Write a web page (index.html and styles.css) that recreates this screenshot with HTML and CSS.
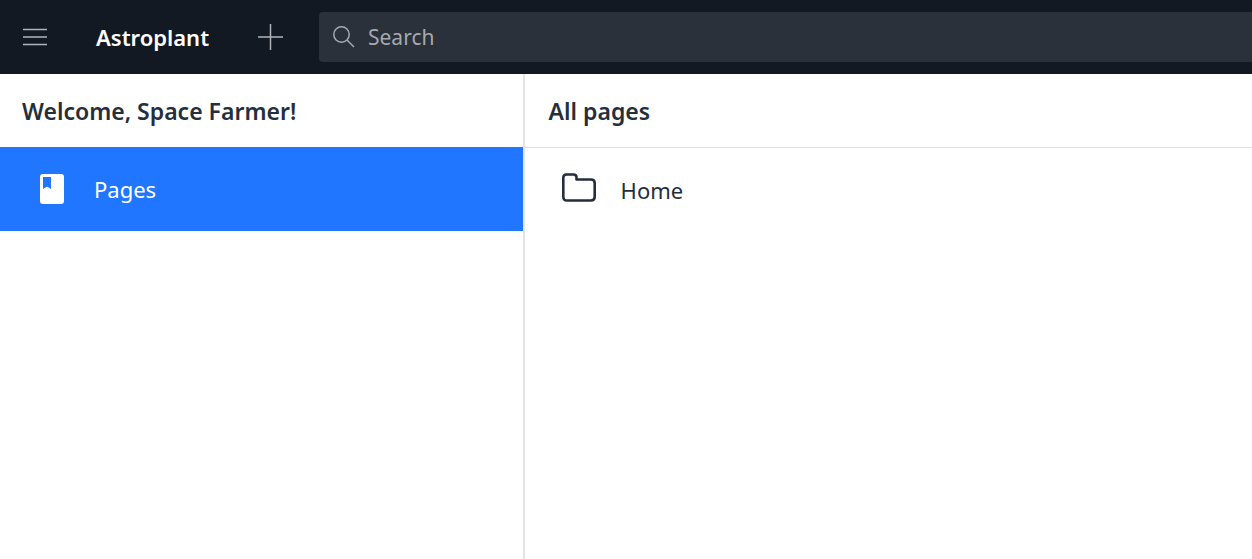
FILE: index.html
```html
<!DOCTYPE html>
<html lang="en">
<head>
<meta charset="utf-8">
<title>Astroplant</title>
<link rel="stylesheet" href="styles.css">
</head>
<body>
<header class="topbar">
  <button class="icon-button menu-button" type="button" aria-label="Menu">
    <svg width="24" height="18" viewBox="0 0 24 18" fill="none" stroke="currentColor" stroke-width="1.5"><path d="M0 1.500h24M0 9h24M0 16.500h24"/></svg>
  </button>
  <a class="brand" href="#">Astroplant</a>
  <button class="icon-button add-button" type="button" aria-label="Add">
    <svg width="26" height="26" viewBox="0 0 26 26" fill="none" stroke="currentColor" stroke-width="1.500"><path d="M0 13h25M12.500 0v26"/></svg>
  </button>
  <label class="search">
    <svg width="22" height="22" viewBox="0 0 22 22" fill="none" stroke="currentColor" stroke-width="1.500"><circle cx="8.500" cy="8.500" r="7.700"/><path d="M14 14l7 7"/></svg>
    <input class="search-input" type="text" placeholder="Search" aria-label="Search">
  </label>
</header>
<main class="columns">
  <nav class="sidebar">
    <h2 class="heading">Welcome, Space Farmer!</h2>
    <a class="nav-item" href="#">
      <svg width="24" height="30" viewBox="0 0 24 30"><rect width="24" height="30" rx="3" fill="#fff"/><path d="M3 3h8v12l-4-2.500-4 2.500z" fill="#2176ff"/></svg>
      Pages
    </a>
  </nav>
  <section class="explorer">
    <h2 class="heading heading-ruled">All pages</h2>
    <a class="page-item" href="#">
      <svg width="34" height="34" viewBox="0 0 34 34" fill="none" stroke="currentColor" stroke-width="2.600" stroke-linejoin="round"><path d="M4.500 1.500h7q3 0 3 3v2h14.500q3.700 0 3.700 3.700v13.600q0 3.700-3.700 3.700h-24q-3.700 0-3.700-3.700v-19q0-3.300 3.200-3.300z"/></svg>
      Home
    </a>
  </section>
</main>
</body>
</html>
```
FILE: styles.css
```css
* { box-sizing: border-box; }
body {
  margin: 0;
  min-height: 100vh;
  display: flex;
  flex-direction: column;
  background: #fff;
  color: #252e3b;
  font: 22px/32px "Noto Sans", "Open Sans", sans-serif;
}
a { color: inherit; text-decoration: none; }
svg { display: block; flex: none; }
.topbar {
  display: flex;
  align-items: center;
  height: 74px;
  background: #121923;
}
.icon-button { border: 0; padding: 0; background: none; color: #b0b4ba; }
.menu-button { margin-left: 23px; }
.brand { margin-left: 49px; width: 162px; color: #fff; font-weight: 600; }
.search {
  flex: 1;
  display: flex;
  align-items: center;
  gap: 13px;
  height: 50px;
  margin-left: 35px;
  padding-left: 14px;
  border-radius: 4px 0 0 4px;
  background: #2a313b;
  color: #a6a9ae;
}
.search-input {
  flex: 1;
  min-width: 0;
  height: 32px;
  border: 0;
  padding: 0;
  outline: 0;
  background: none;
  color: inherit;
  font: inherit;
  font-size: 21px;
}
.search-input::placeholder { color: inherit; opacity: 1; }
.columns { flex: 1; display: flex; }
.sidebar { width: 41.9%; border-right: 2px solid #e2e4e6; }
.explorer { flex: 1; }
.heading {
  margin: 0;
  height: 73px;
  padding: 21px 22px;
  font-size: 23px;
  font-weight: 600;
}
.heading-ruled { height: 74px; padding-left: 24px; border-bottom: 1px solid #e0e0e0; }
.nav-item, .page-item { display: flex; align-items: center; height: 84px; }
.nav-item { gap: 30px; padding-left: 40px; background: #2176ff; color: #fff; }
.page-item { gap: 25px; padding-left: 37px; }
```
